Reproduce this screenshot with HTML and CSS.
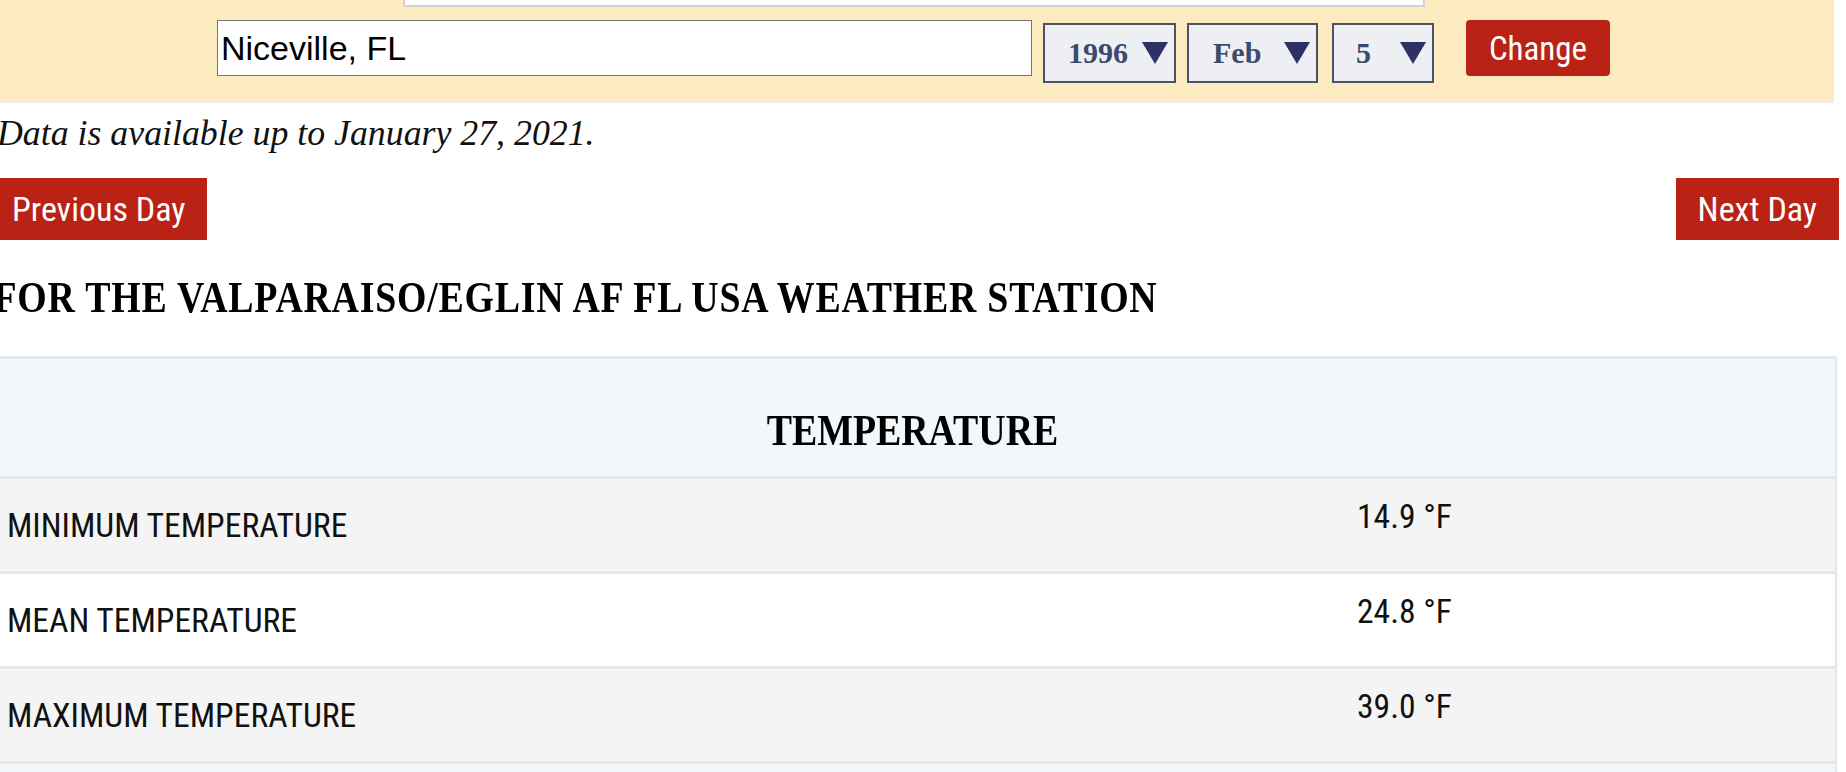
FILE: index.html
```html
<!DOCTYPE html>
<html lang="en">
<head>
<meta charset="utf-8">
<title>Weather history - Niceville, FL</title>
<link rel="stylesheet" href="styles.css">
</head>
<body>
<div class="page">
  <div class="search-band">
    <div class="search-top"></div>
    <form class="loc-form">
      <input class="loc-input" type="text" value="Niceville, FL">
      <div class="pick pick-year">
        <span class="pick-val">1996</span>
        <svg class="pick-arrow" viewBox="0 0 26 22"><polygon points="0,0 26,0 13,22"/></svg>
      </div>
      <div class="pick pick-month">
        <span class="pick-val">Feb</span>
        <svg class="pick-arrow" viewBox="0 0 26 22"><polygon points="0,0 26,0 13,22"/></svg>
      </div>
      <div class="pick pick-day">
        <span class="pick-val">5</span>
        <svg class="pick-arrow" viewBox="0 0 26 22"><polygon points="0,0 26,0 13,22"/></svg>
      </div>
      <button class="change-btn" type="button">Change</button>
    </form>
  </div>

  <p class="avail">Data is available up to January 27, 2021.</p>

  <div class="day-nav">
    <a class="day-btn" href="#">Previous Day</a>
    <a class="day-btn" href="#">Next Day</a>
  </div>

  <h2 class="station">FOR THE VALPARAISO/EGLIN AF FL USA WEATHER STATION</h2>

  <div class="wtable">
    <div class="whead"><div class="whead-title">TEMPERATURE</div></div>
    <div class="wrow shade">
      <div class="wlabel">MINIMUM TEMPERATURE</div>
      <div class="wval">14.9 °F</div>
    </div>
    <div class="wrow">
      <div class="wlabel">MEAN TEMPERATURE</div>
      <div class="wval">24.8 °F</div>
    </div>
    <div class="wrow shade">
      <div class="wlabel">MAXIMUM TEMPERATURE</div>
      <div class="wval">39.0 °F</div>
    </div>
    <div class="whead whead-next"></div>
  </div>
</div>
</body>
</html>
```

FILE: styles.css
```css
html, body {
  margin: 0;
  padding: 0;
  background: #ffffff;
  overflow: hidden;
}

.page {
  margin-left: -10px;
  width: 1849px;
  color: #111111;
}

/* ---------- search band ---------- */
.search-band {
  width: 1844px;
  height: 101px;
  background: #fcebc1;
  border-bottom: 2px solid #ececec;
  box-sizing: content-box;
}

.search-top {
  width: 1018px;
  height: 5px;
  margin: 0 0 0 413px;
  background: #ffffff;
  border: 2px solid #d2d2d2;
  border-top: none;
}

.loc-form {
  display: flex;
  justify-content: flex-start;
  align-items: flex-start;
  margin: 13px 0 0;
  padding-left: 227px;
}

.loc-input {
  width: 815px;
  height: 56px;
  box-sizing: border-box;
  border: 1px solid #767676;
  background: #ffffff;
  font-family: "Liberation Sans", Arial, sans-serif;
  font-size: 34px;
  color: #000000;
  padding: 0 3px;
  margin: 0;
  outline: none;
}

.pick {
  position: relative;
  height: 60px;
  box-sizing: border-box;
  margin-top: 3px;
  border: 2px solid #4c5268;
  background: #edeff3;
  display: flex;
  align-items: center;
}

.pick-year { width: 133px; margin-left: 11px; padding-left: 23px; }
.pick-month { width: 131px; margin-left: 11px; padding-left: 24px; }
.pick-day { width: 102px; margin-left: 14px; padding-left: 22px; }

.pick-val {
  font-family: "Liberation Serif", "Times New Roman", serif;
  font-weight: bold;
  font-size: 30px;
  color: #3b4a6d;
}

.pick-arrow {
  position: absolute;
  right: 6px;
  top: 17px;
  width: 26px;
  height: 22px;
  fill: #2d3166;
  filter: blur(0.5px);
}

.change-btn {
  margin-left: 32px;
  width: 144px;
  height: 56px;
  border: none;
  border-radius: 4px;
  background: #b92214;
  color: #ffffff;
  font-family: "Roboto Condensed", Roboto, sans-serif;
  font-size: 33px;
  padding: 0;
  cursor: pointer;
}

/* ---------- notice ---------- */
.avail {
  margin: 10px 0 0;
  padding-left: 7px;
  line-height: 40px;
  font-family: "Liberation Serif", "Times New Roman", serif;
  font-style: italic;
  font-size: 35.8px;
  color: #111111;
}

/* ---------- prev / next ---------- */
.day-nav {
  display: flex;
  justify-content: space-between;
  margin-top: 25px;
}

.day-btn {
  display: flex;
  align-items: center;
  height: 62px;
  padding: 0 22px;
  background: #b92214;
  color: #ffffff;
  text-decoration: none;
  font-family: "Roboto Condensed", Roboto, sans-serif;
  font-size: 34px;
}

/* ---------- condensed bold serif headings ---------- */
.station {
  margin: 34px 0 0;
  padding-left: 4px;
  height: 48px;
  line-height: 48px;
  font-family: "Liberation Serif", "Times New Roman", serif;
  font-weight: bold;
  font-size: 44px;
  letter-spacing: 0.9px;
  white-space: nowrap;
  color: #000000;
  transform: scaleX(0.86);
  transform-origin: left center;
}

/* ---------- table ---------- */
.wtable {
  width: 1847px;
  margin-top: 34px;
  border-top: 3px solid #e6e7e9;
  border-right: 2px solid #e6e7e9;
  box-sizing: border-box;
}

.whead {
  height: 120px;
  box-sizing: border-box;
  padding-top: 48px;
  background: #f2f7fc;
  border-bottom: 3px solid #e6e7e9;
}

.whead-title {
  height: 48px;
  line-height: 48px;
  text-align: center;
  font-family: "Liberation Serif", "Times New Roman", serif;
  font-weight: bold;
  font-size: 44px;
  white-space: nowrap;
  color: #000000;
  transform: scaleX(0.86);
  transform-origin: center center;
}

.whead-next {
  height: 40px;
  border-bottom: none;
}

.wrow {
  display: grid;
  grid-template-columns: 1fr 478px;
  height: 95px;
  box-sizing: border-box;
  border-bottom: 3px solid #e6e7e9;
  background: #ffffff;
  font-family: "Roboto Condensed", Roboto, sans-serif;
  font-size: 33.6px;
  color: #111111;
}

.wrow.shade {
  background: #f4f4f4;
}

.wlabel {
  display: flex;
  align-items: center;
  padding-left: 17px;
}

.wval {
  display: flex;
  align-items: center;
  padding-bottom: 18px;
}
```
